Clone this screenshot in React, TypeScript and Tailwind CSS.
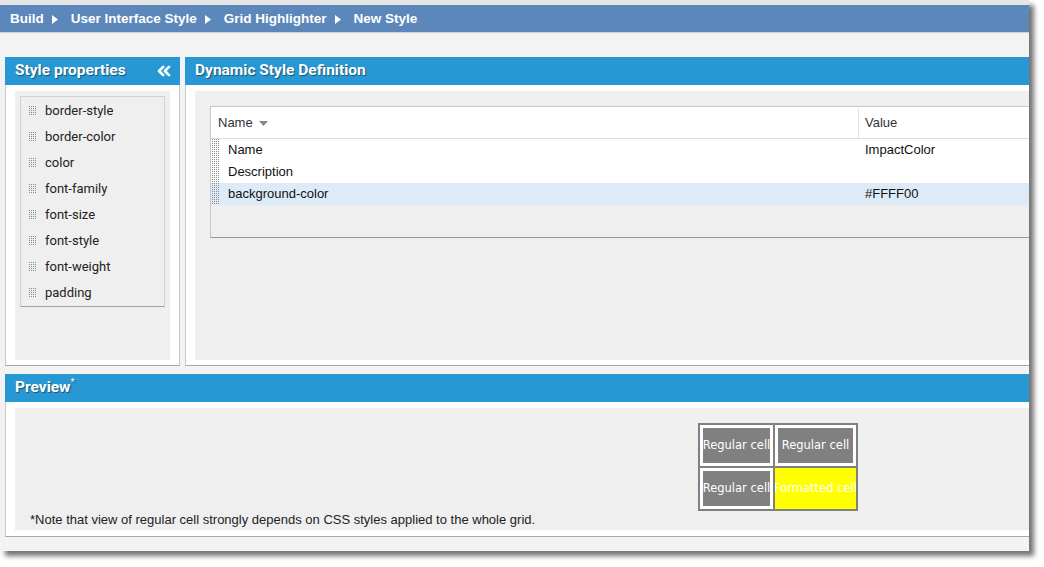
import React from 'react';
import { ChevronsLeft } from 'lucide-react';

const crumbs = ['Build', 'User Interface Style', 'Grid Highlighter', 'New Style'];

const styleProps = [
  'border-style',
  'border-color',
  'color',
  'font-family',
  'font-size',
  'font-style',
  'font-weight',
  'padding',
];

const rows = [
  { name: 'Name', value: 'ImpactColor', selected: false },
  { name: 'Description', value: '', selected: false },
  { name: 'background-color', value: '#FFFF00', selected: true },
];

// little dotted drag handle
const Grip = ({ cols = 4, rowsCount = 5 }: { cols?: number; rowsCount?: number }) => (
  <svg width={cols * 2} height={rowsCount * 2} className="shrink-0">
    {Array.from({ length: cols * rowsCount }).map((_, i) => (
      <rect
        key={i}
        x={(i % cols) * 2}
        y={Math.floor(i / cols) * 2}
        width={1}
        height={1}
        fill="#8a8a8a"
      />
    ))}
  </svg>
);

const PanelHeader = ({ children }: { children?: React.ReactNode }) => (
  <div className="h-[28px] bg-[#2898d5] flex items-center justify-between px-[10px]">{children}</div>
);

const HeaderTitle = ({ children }: { children: React.ReactNode }) => (
  <span
    className="text-white font-bold text-[15.5px] [text-shadow:1px_1px_1px_rgba(0,0,0,0.45)]"
    style={{ fontFamily: 'Roboto, "Liberation Sans", sans-serif' }}
  >
    {children}
  </span>
);

const Cell = ({ formatted }: { formatted?: boolean }) => (
  <div
    className={`h-[41px] flex items-center justify-center overflow-hidden whitespace-nowrap text-white text-[11.5px] ${
      formatted ? 'bg-[#ffff00]' : 'bg-[#808080] border-[3px] border-white'
    }`}
    style={{ fontFamily: '"DejaVu Sans", Verdana, sans-serif' }}
  >
    {formatted ? 'Formatted cell' : 'Regular cell'}
  </div>
);

export default function App() {
  return (
    <div className="w-[1044px] h-[567px] bg-white" style={{ fontFamily: '"Liberation Sans", Arial, sans-serif' }}>
      <div className="w-[1029px] h-[551px] bg-[#f3f3f3] overflow-hidden shadow-[5px_5px_5px_rgba(0,0,0,0.55)] flex flex-col">
        <div className="h-[5px] bg-[#e6e6e6]" />
        {/* breadcrumb */}
        <div className="h-[28px] bg-[#5b87ba] border-b border-[#d0d0d0] flex items-center pl-[10px] pt-[2px] text-white font-bold text-[13.5px]">
          {crumbs.map((c, i) => (
            <div key={c} className="flex items-center">
              <span>{c}</span>
              {i < crumbs.length - 1 && (
                <svg width="6" height="9" viewBox="0 0 6 9" className="ml-[8px] mr-[13px]">
                  <path d="M0 0 L6 4.5 L0 9 Z" fill="white" />
                </svg>
              )}
            </div>
          ))}
        </div>

        <div className="flex gap-[5px] pl-[5px] mt-[24px]">
          {/* Style properties */}
          <div className="w-[175px] shrink-0 flex flex-col">
            <PanelHeader>
              <HeaderTitle>Style properties</HeaderTitle>
              <ChevronsLeft size={20} strokeWidth={3.2} color="white" className="-mr-[4px]" />
            </PanelHeader>
            <div className="h-[281px] bg-white border-x border-b border-[#c8c8c8] border-b-[#a8a8a8] px-[9px] pt-[6px] pb-[5px]">
              <div className="h-full bg-[#efefef] p-[5px]">
                <div className="bg-[#efefef] border border-[#d2d2d2] border-b-[#a0a0a0] pt-[1px]">
                  {styleProps.map((p) => (
                    <div
                      key={p}
                      className="h-[26px] flex items-center pl-[8px] gap-[8px] text-[13px] text-[#222]"
                      style={{ fontFamily: 'Roboto, "Liberation Sans", sans-serif' }}
                    >
                      <Grip />
                      <span>{p}</span>
                    </div>
                  ))}
                </div>
              </div>
            </div>
          </div>

          {/* Dynamic Style Definition */}
          <div className="w-[860px] shrink-0 flex flex-col">
            <PanelHeader>
              <HeaderTitle>Dynamic Style Definition</HeaderTitle>
            </PanelHeader>
            <div className="h-[281px] bg-white border-x border-b border-[#c8c8c8] border-b-[#a8a8a8] pl-[9px] pt-[6px] pb-[5px]">
              <div className="h-full bg-[#efefef] pl-[15px] pt-[15px]">
                <div className="w-[840px] border border-[#c8c8c8] border-b-[#999] bg-[#efefef] text-[13px] text-[#111]">
                  <div className="h-[32px] bg-white border-b border-[#dcdcdc] flex items-center pt-[1px]">
                    <div className="w-[647px] flex items-center pl-[7px] gap-[6px] text-[#333]">
                      <span>Name</span>
                      <svg width="9" height="5" viewBox="0 0 9 5">
                        <path d="M0 0 L9 0 L4.5 5 Z" fill="#888" />
                      </svg>
                    </div>
                    <div className="h-full border-l border-[#e2e2e2] flex items-center pl-[6px] text-[#333]">Value</div>
                  </div>
                  {rows.map((r) => (
                    <div
                      key={r.name}
                      className={`h-[22px] flex items-center ${r.selected ? 'bg-[#ddebf9]' : 'bg-white'}`}
                    >
                      <div className="w-[647px] h-full flex items-center">
                        <div className="h-full flex items-center pl-[1px]">
                          <Grip cols={4} rowsCount={11} />
                        </div>
                        <span className="ml-[8px]">{r.name}</span>
                      </div>
                      <span className="pl-[7px]">{r.value}</span>
                    </div>
                  ))}
                  <div className="h-[32px]" />
                </div>
              </div>
            </div>
          </div>
        </div>

        {/* Preview */}
        <div className="w-[1040px] ml-[5px] mt-[8px] flex flex-col">
          <PanelHeader>
            <div className="flex items-start">
              <HeaderTitle>Preview</HeaderTitle>
              <span className="text-white text-[11px] leading-none mt-[1px] [text-shadow:1px_1px_1px_rgba(0,0,0,0.45)]">
                *
              </span>
            </div>
          </PanelHeader>
          <div className="h-[135px] bg-white border-x border-b border-[#c8c8c8] border-b-[#a8a8a8] pl-[9px] pt-[6px] pb-[6px]">
            <div className="h-full bg-[#efefef] relative">
              <div className="absolute left-[683px] top-[15px] bg-[#808080] p-[2px] grid grid-cols-[73px_81px] gap-[2px]">
                <Cell />
                <Cell />
                <Cell />
                <Cell formatted />
              </div>
              <div className="absolute left-[15px] bottom-[1px] text-[13px] text-[#222]">
                *Note that view of regular cell strongly depends on CSS styles applied to the whole grid.
              </div>
            </div>
          </div>
        </div>
      </div>
    </div>
  );
}
